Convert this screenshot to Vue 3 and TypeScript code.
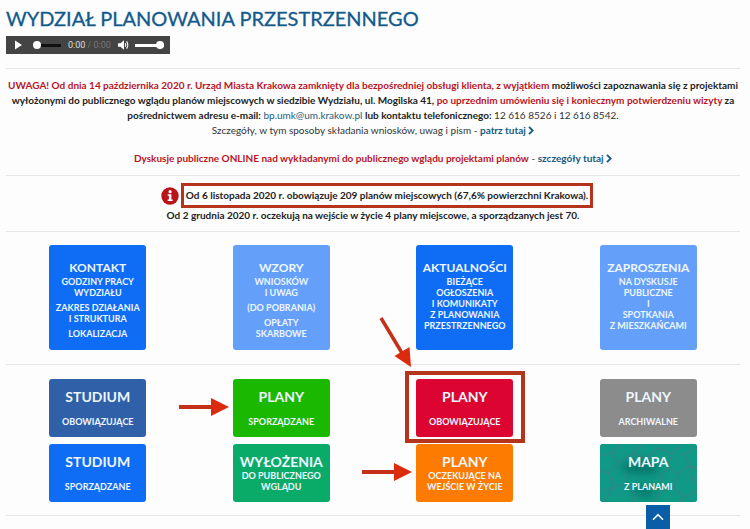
<script setup lang="ts">
import { ref } from 'vue'

type ArrowKind = 'side' | 'diagonal'

interface Tile {
  title: string
  groups: string[][]
  tone: string
  arrow?: ArrowKind
  marked?: boolean
}

const infoTiles: Tile[] = [
  {
    title: 'KONTAKT',
    groups: [['GODZINY PRACY', 'WYDZIAŁU'], ['ZAKRES DZIAŁANIA', 'I STRUKTURA'], ['LOKALIZACJA']],
    tone: 'blue',
  },
  {
    title: 'WZORY',
    groups: [['WNIOSKÓW', 'I UWAG'], ['(DO POBRANIA)'], ['OPŁATY', 'SKARBOWE']],
    tone: 'sky',
  },
  {
    title: 'AKTUALNOŚCI',
    groups: [['BIEŻĄCE', 'OGŁOSZENIA', 'I KOMUNIKATY', 'Z PLANOWANIA', 'PRZESTRZENNEGO']],
    tone: 'blue',
  },
  {
    title: 'ZAPROSZENIA',
    groups: [['NA DYSKUSJE', 'PUBLICZNE', 'I', 'SPOTKANIA', 'Z MIESZKAŃCAMI']],
    tone: 'sky',
  },
]

const planTiles: Tile[] = [
  { title: 'STUDIUM', groups: [['OBOWIĄZUJĄCE']], tone: 'navy' },
  { title: 'PLANY', groups: [['SPORZĄDZANE']], tone: 'green', arrow: 'side' },
  { title: 'PLANY', groups: [['OBOWIĄZUJĄCE']], tone: 'red', arrow: 'diagonal', marked: true },
  { title: 'PLANY', groups: [['ARCHIWALNE']], tone: 'grey' },
  { title: 'STUDIUM', groups: [['SPORZĄDZANE']], tone: 'blue' },
  { title: 'WYŁOŻENIA', groups: [['DO PUBLICZNEGO', 'WGLĄDU']], tone: 'emerald' },
  { title: 'PLANY', groups: [['OCZEKUJĄCE NA', 'WEJŚCIE W ŻYCIE']], tone: 'orange', arrow: 'side' },
  { title: 'MAPA', groups: [['Z PLANAMI']], tone: 'map' },
]

const position = ref(0)
const volume = ref(100)

function toTop(): void {
  window.scrollTo({ top: 0, behavior: 'smooth' })
}
</script>

<template>
  <main class="page">
    <h1>WYDZIAŁ PLANOWANIA PRZESTRZENNEGO</h1>

    <div class="player">
      <button class="icon-button" type="button" aria-label="Odtwórz">
        <svg width="7" height="10" viewBox="0 0 7 10"><path d="M0 0.5 7 5 0 9.5Z" fill="#fff" /></svg>
      </button>
      <input v-model.number="position" class="seek" type="range" min="0" max="100" aria-label="Pozycja" />
      <span class="time">0:00 <span class="total">/ 0:00</span></span>
      <button class="icon-button" type="button" aria-label="Wycisz">
        <svg width="11" height="10" viewBox="0 0 11 10">
          <path d="M0 3.2H2.4L6 0.3V9.7L2.4 6.8H0Z" fill="#fff" />
          <path d="M7.2 3.2Q8.3 5 7.2 6.8M8.6 1.4Q11 5 8.6 8.6" fill="none" stroke="#fff" stroke-width="1.1" />
        </svg>
      </button>
      <input v-model.number="volume" class="volume" type="range" min="0" max="100" aria-label="Głośność" />
    </div>

    <section class="notice">
      <p>
        <strong><em>UWAGA! Od dnia 14 października 2020 r. Urząd Miasta Krakowa zamknięty dla bezpośredniej obsługi klienta, z wyjątkiem</em> możliwości zapoznawania się z projektami<br />
          wyłożonymi do publicznego wglądu planów miejscowych w siedzibie Wydziału, ul. Mogilska 41, <em>po uprzednim umówieniu się i koniecznym potwierdzeniu wizyty</em> za<br />
          pośrednictwem adresu e-mail:</strong> <a href="mailto:bp.umk@um.krakow.pl">bp.umk@um.krakow.pl</a> <strong>lub kontaktu telefonicznego:</strong> 12 616 8526 i 12 616 8542.<br />
        Szczegóły, w tym sposoby składania wniosków, uwag i pism -
        <a class="more" href="#szczegoly">patrz tutaj <svg class="chevron" width="6" height="9" viewBox="0 0 6 9"><path d="M1 0.8 4.7 4.5 1 8.2" /></svg></a>
      </p>
      <p>
        <strong><em>Dyskusje publiczne ONLINE nad wykładanymi do publicznego wglądu projektami planów</em></strong> -
        <a class="more" href="#dyskusje">szczegóły tutaj <svg class="chevron" width="6" height="9" viewBox="0 0 6 9"><path d="M1 0.8 4.7 4.5 1 8.2" /></svg></a>
      </p>
    </section>

    <section class="summary">
      <p class="lead">
        <svg class="info" width="18" height="18" viewBox="0 0 18 18" aria-hidden="true">
          <circle cx="9" cy="9" r="8.7" fill="#b9141a" />
          <circle cx="9.1" cy="4.7" r="1.6" fill="#fff" />
          <path d="M6.7 7.3H10.4V12.4H11.6V13.9H6.7V12.4H7.9V8.8H6.7Z" fill="#fff" />
        </svg>
        <span class="framed">Od 6 listopada 2020 r. obowiązuje 209 planów miejscowych (67,6% powierzchni Krakowa).</span>
      </p>
      <p>Od 2 grudnia 2020 r. oczekują na wejście w życie 4 plany miejscowe, a sporządzanych jest 70.</p>
    </section>

    <nav class="tiles info-tiles" aria-label="Informacje">
      <a v-for="tile in infoTiles" :key="tile.title" href="#info" class="tile" :class="tile.tone">
        <span class="title">{{ tile.title }}</span>
        <span class="groups">
          <span v-for="(group, g) in tile.groups" :key="g" class="group">
            <span v-for="line in group" :key="line" class="line">{{ line }}</span>
          </span>
        </span>
      </a>
    </nav>

    <nav class="tiles plan-tiles" aria-label="Plany">
      <a v-for="(tile, i) in planTiles" :key="i" href="#plany" class="tile" :class="tile.tone">
        <svg v-if="tile.tone === 'map'" class="texture" viewBox="0 0 97 58" preserveAspectRatio="none" aria-hidden="true">
          <defs>
            <filter id="soft" x="-30%" y="-50%" width="160%" height="200%"><feGaussianBlur stdDeviation="4" /></filter>
          </defs>
          <rect width="97" height="58" fill="#109a86" />
          <path d="M20 20 45 16 62 24 52 30 26 29ZM28 46 45 41 58 48 46 54Z" fill="#04685e" opacity="0.7" filter="url(#soft)" />
          <g fill="none" stroke="#3f7f86" stroke-width="1.2" opacity="0.8">
            <path d="M0 12 12 8 22 0M12 8 18 20 8 29 0 26M18 20 32 10 43 0M32 10 47 14 58 4 72 10 80 0M8 29 14 43 4 58M14 43 28 39 36 52 31 58M28 39 24 29" />
            <path d="M72 10 67 23 78 30 90 21 97 25M90 21 84 10 97 4M78 30 74 43 84 53 97 46M74 43 60 48 54 58M84 53 80 58M67 23 60 34 66 44M90 21 93 37 97 40M47 14 52 24M0 47 14 43" />
          </g>
        </svg>
        <span class="title">{{ tile.title }}</span>
        <span class="groups">
          <span v-for="(group, g) in tile.groups" :key="g" class="group">
            <span v-for="line in group" :key="line" class="line">{{ line }}</span>
          </span>
        </span>
        <span v-if="tile.marked" class="marker"></span>
        <svg v-if="tile.arrow === 'side'" class="arrow side" width="50" height="18" viewBox="0 0 50 18" aria-hidden="true">
          <path d="M0 9H33" stroke="#c5301a" stroke-width="4" />
          <path d="M32 0 50 9 32 18Z" fill="#dc2a0c" />
        </svg>
        <svg v-if="tile.arrow === 'diagonal'" class="arrow diagonal" width="34" height="52" viewBox="0 0 34 52" aria-hidden="true">
          <path d="M2 1 23 36" stroke="#c5301a" stroke-width="3.5" />
          <path d="M15.5 39 30.5 30 32 50Z" fill="#dc2a0c" />
        </svg>
      </a>
    </nav>

    <button class="to-top" type="button" aria-label="Do góry" @click="toTop">
      <svg width="12" height="8" viewBox="0 0 12 8"><path d="M1 6.8 6 1.6 11 6.8" fill="none" stroke="#fff" stroke-width="1.6" /></svg>
    </button>
  </main>
</template>

<style>
body {
  margin: 0;
  background: #fdfdfd;
}
</style>

<style scoped>
.page {
  box-sizing: border-box;
  padding: 6px 10px 0 6px;
  font-family: Lato, "Liberation Sans", sans-serif;
  font-size: 10px;
  line-height: 15px;
  color: #333;
}

h1 {
  margin: 0 0 6px;
  font-size: 20px;
  line-height: 24px;
  font-weight: 400;
  color: #125a8c;
  -webkit-text-stroke: 0.3px #125a8c;
}

p {
  margin: 0;
}

a {
  color: #1b5e7d;
  text-decoration: none;
}

strong {
  font-weight: 700;
  color: #222;
}

em {
  font-style: normal;
  color: #b9141f;
}

.player {
  display: flex;
  align-items: center;
  box-sizing: border-box;
  width: 164px;
  height: 18px;
  padding: 0 6px 0 9px;
  background: #444;
}

.icon-button {
  display: flex;
  padding: 0;
  border: 0;
  background: none;
}

input[type='range'] {
  appearance: none;
  height: 8px;
  margin: 0;
  background: linear-gradient(var(--track), var(--track)) center / 100% 3px no-repeat;
}

input[type='range']::-webkit-slider-thumb {
  appearance: none;
  width: 8px;
  height: 8px;
  border-radius: 50%;
  background: #fff;
}

.seek {
  --track: #111;
  width: 28px;
  margin: 0 7px 0 11px !important;
}

.volume {
  --track: #fff;
  width: 29px;
  margin: 0 0 0 6px !important;
}

.time {
  flex: 1;
  font-family: Roboto, sans-serif;
  font-size: 9px;
  line-height: 18px;
  white-space: nowrap;
  color: #ddd;
}

.total {
  color: #777;
}

.notice {
  display: grid;
  gap: 13px;
  margin-top: 14px;
  padding: 9px 0;
  border-top: 1px solid #e6e6e6;
  text-align: center;
}

.more {
  font-weight: 700;
  color: #145a82;
}

.chevron {
  vertical-align: -1px;
  fill: none;
  stroke: #145a82;
  stroke-width: 1.8;
}

.summary {
  padding: 7px 0 8px;
  border-top: 1px solid #e6e6e6;
  text-align: center;
  font-weight: 700;
  color: #222;
}

.lead {
  display: flex;
  justify-content: center;
  align-items: center;
  gap: 2px;
  padding-left: 8px;
}

.framed {
  padding: 2px;
  border: 3px solid #b5341c;
}

.tiles {
  display: grid;
  grid-template-columns: repeat(4, 1fr);
  justify-items: center;
  row-gap: 7px;
  padding: 13px 0 14px;
  border-top: 1px solid #e6e6e6;
}

.plan-tiles {
  padding: 14px 0 13px;
  border-bottom: 1px solid #e6e6e6;
}

.tile {
  position: relative;
  box-sizing: border-box;
  display: flex;
  flex-direction: column;
  width: 97px;
  min-height: 58px;
  padding-top: 9px;
  border-radius: 3px;
  font-size: 9px;
  font-weight: 700;
  line-height: 11px;
  text-align: center;
  white-space: nowrap;
  color: #eef6ff;
}

.title {
  position: relative;
  font-size: 14px;
  line-height: 17px;
}

.info-tiles .tile {
  min-height: 105px;
  padding-top: 14px;
}

.info-tiles .title {
  font-size: 12px;
}

.groups {
  position: relative;
  flex: 1;
  display: flex;
  flex-direction: column;
  gap: 4px;
}

.plan-tiles .groups {
  justify-content: flex-end;
  padding-bottom: 10px;
}

.line {
  display: block;
}

.blue { background: #0f6cf5; }
.sky { background: #64a0fa; }
.navy { background: #3060a8; }
.green { background: #1bb800; }
.red { background: #dc0430; }
.grey { background: #8c8c8c; }
.emerald { background: #0aab68; }
.orange { background: #fd7b00; }
.map { background: #109a86; }

.texture {
  position: absolute;
  inset: 0;
  width: 100%;
  height: 100%;
  border-radius: 3px;
}

.marker {
  position: absolute;
  inset: -8px -12px -6px -11px;
  border: 4px solid #b5341c;
}

.arrow {
  position: absolute;
}

.side {
  top: 19px;
  right: 101px;
}

.diagonal {
  top: -62px;
  left: -37px;
}

.to-top {
  position: fixed;
  right: 80px;
  bottom: 0;
  display: flex;
  justify-content: center;
  align-items: center;
  width: 24px;
  height: 24px;
  padding: 0;
  border: 0;
  background: #0a5ea8;
}
</style>
